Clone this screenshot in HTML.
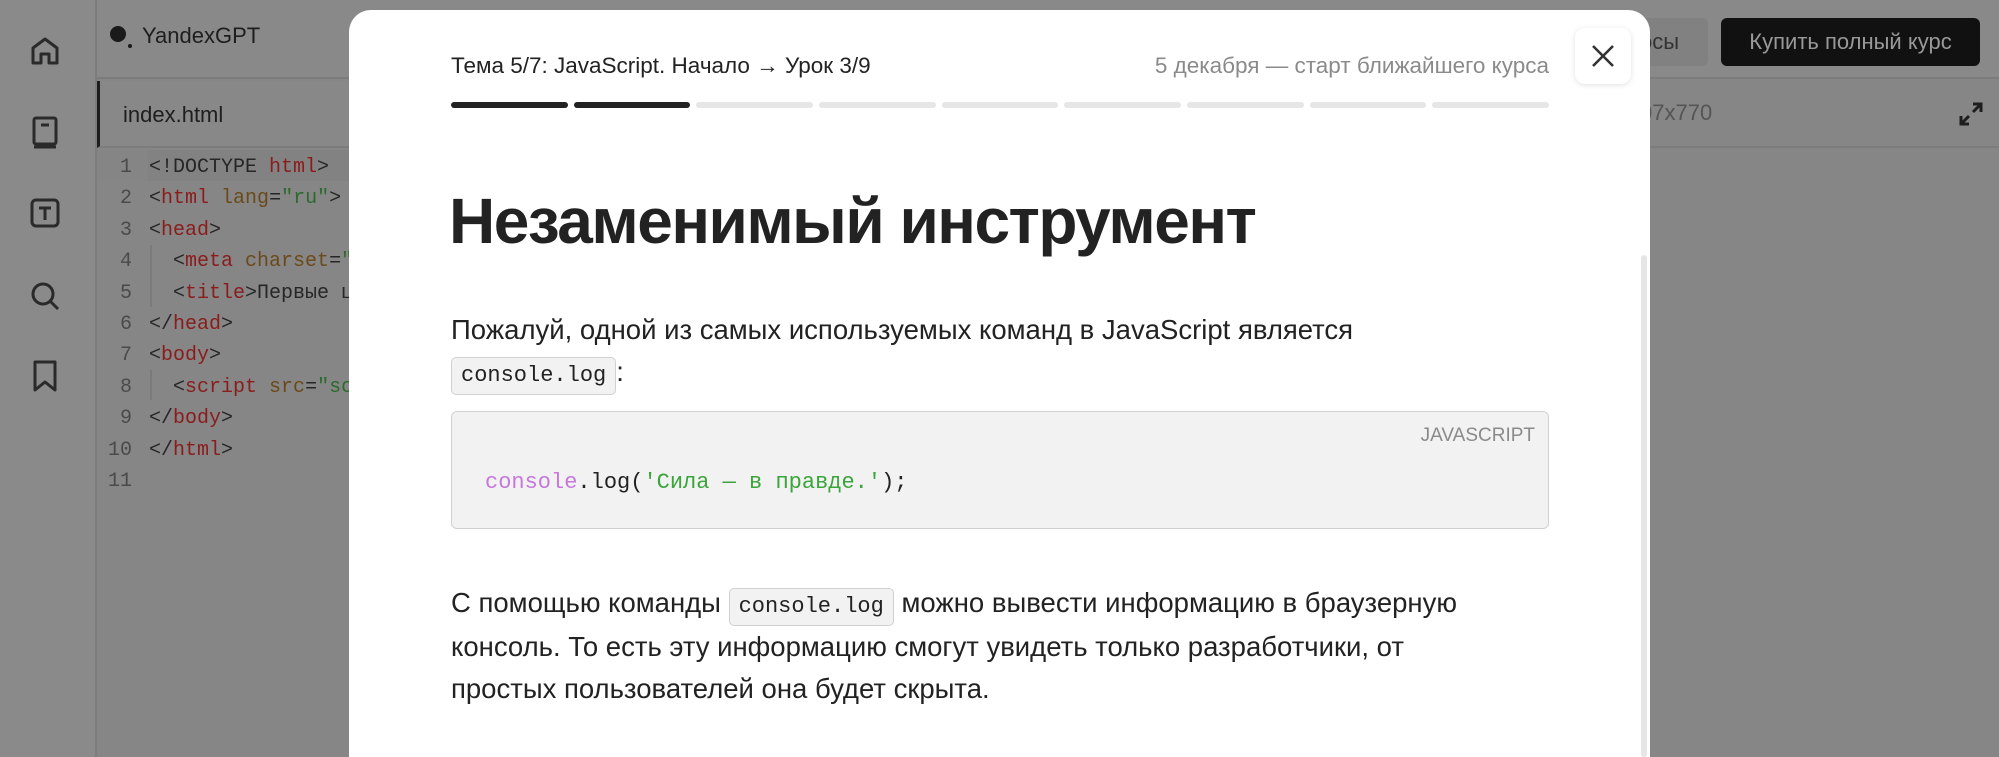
<!DOCTYPE html>
<html style="width:1999px;height:757px;overflow:hidden"><head><meta charset="utf-8">
<style>
*{margin:0;padding:0;box-sizing:border-box}
body{width:1999px;height:757px;overflow:hidden;background:#868686;font-family:"Liberation Sans","Noto Sans CJK SC",sans-serif;position:relative}
.a{position:absolute}
.side{left:0;top:0;width:97px;height:757px;background:#8a8a8a;border-right:2px solid #7c7c7c}
.top{left:97px;top:0;width:1902px;height:79px;background:#898989;border-bottom:2px solid #7c7c7c}
.code{font-family:"Liberation Mono",monospace;font-size:20px;color:#262626;white-space:pre}
.ln{color:#4a4a4a;width:36px;text-align:right;left:96px}
.r{color:#8a1c1c}.b{color:#6a4a1a}.g{color:#2d6a2d}
.modal{left:349px;top:10px;width:1301px;height:747px;background:#fff;border-radius:22px 22px 0 0}
.mc{font-family:"Liberation Mono",monospace}
.ic{background:#f2f2f2;border:1px solid #d0d0d0;border-radius:5px;font-family:"Liberation Mono",monospace;font-size:22px;color:#222;padding:0 9px}
.p{font-size:27.5px;color:#222;line-height:41.5px;white-space:nowrap}
</style></head><body>
<div class="a side"></div>
<div class="a top"></div>
<svg class="a" style="left:30px;top:36px" width="30" height="30" viewBox="0 0 30 30" fill="none" stroke="#2a2a2a" stroke-width="3" stroke-linejoin="round"><path d="M3 27V12L15 3l12 9v15h-8v-9h-8v9z"/></svg>
<svg class="a" style="left:31px;top:116px" width="28" height="34" viewBox="0 0 28 34" fill="none" stroke="#2a2a2a" stroke-width="3"><rect x="3" y="2" width="22" height="26" rx="2"/><path d="M3 31h22M10 9h8"/></svg>
<svg class="a" style="left:30px;top:198px" width="30" height="30" viewBox="0 0 30 30" fill="none" stroke="#2a2a2a" stroke-width="3"><rect x="2" y="2" width="26" height="26" rx="4"/><path d="M9 10h12M15 10v12"/></svg>
<svg class="a" style="left:30px;top:281px" width="30" height="30" viewBox="0 0 30 30" fill="none" stroke="#2a2a2a" stroke-width="3"><circle cx="13" cy="13" r="10"/><path d="M20 20l8 8"/></svg>
<svg class="a" style="left:32px;top:360px" width="26" height="32" viewBox="0 0 26 32" fill="none" stroke="#2a2a2a" stroke-width="3" stroke-linejoin="round"><path d="M3 2h20v28l-10-8-10 8z"/></svg>
<div class="a" style="left:110px;top:26px;width:16px;height:16px;border-radius:50%;background:#1a1a1a"></div>
<div class="a" style="left:128px;top:44px;width:4px;height:4px;border-radius:50%;background:#1a1a1a"></div>
<div class="a" style="left:142px;top:23px;font-size:22px;color:#1e1e1e">YandexGPT</div>
<div class="a" style="left:97px;top:81px;width:300px;height:67px;background:#888;border-left:3px solid #1e1e1e;border-bottom:2px solid #7c7c7c"></div>
<div class="a" style="left:123px;top:102px;font-size:22px;color:#1e1e1e">index.html</div>
<div class="a" style="left:97px;top:150px;width:300px;height:31px;background:#858585"></div>
<div class="a" style="left:148px;top:150px;width:210px;height:31px;background:#828282"></div>
<div class="a" style="left:150px;top:245px;width:2px;height:62px;background:#7a7a7a"></div>
<div class="a" style="left:150px;top:370px;width:2px;height:30px;background:#7a7a7a"></div>
<div class="a code ln" style="top:152px;line-height:31.4px">1
2
3
4
5
6
7
8
9
10
11</div>
<div class="a code" style="left:149px;top:152px;line-height:31.4px">&lt;!DOCTYPE <span class="r">html</span>&gt;
&lt;<span class="r">html</span> <span class="b">lang</span>=<span class="g">"ru"</span>&gt;
&lt;<span class="r">head</span>&gt;
  &lt;<span class="r">meta</span> <span class="b">charset</span>=<span class="g">"</span>
  &lt;<span class="r">title</span>&gt;Первые ц
&lt;/<span class="r">head</span>&gt;
&lt;<span class="r">body</span>&gt;
  &lt;<span class="r">script</span> <span class="b">src</span>=<span class="g">"sc</span>
&lt;/<span class="r">body</span>&gt;
&lt;/<span class="r">html</span>&gt;
</div>
<div class="a" style="left:1620px;top:18px;width:88px;height:48px;background:#818181;border-radius:6px"></div>
<div class="a" style="left:1640px;top:29px;font-size:22px;color:#333">осы</div>
<div class="a" style="left:1721px;top:18px;width:259px;height:48px;background:#111;border-radius:6px;color:#999;font-size:22px;text-align:center;line-height:48px">Купить полный курс</div>
<div class="a" style="left:1620px;top:81px;width:379px;height:67px;border-bottom:2px solid #7c7c7c"></div>
<div class="a" style="left:1640px;top:100px;font-size:22px;color:#555">07x770</div>
<svg class="a" style="left:1957px;top:100px" width="28" height="28" viewBox="0 0 28 28" fill="none" stroke="#1e1e1e" stroke-width="3"><path d="M16 4h8v8M24 4l-8 8M4 16v8h8M4 24l8-8"/></svg>
<div class="a modal"></div>
<div class="a" style="left:1575px;top:28px;width:56px;height:56px;background:#fff;border-radius:10px;box-shadow:0 1px 6px rgba(0,0,0,.12)"></div>
<svg class="a" style="left:1589px;top:42px" width="28" height="28" viewBox="0 0 28 28" stroke="#333" stroke-width="2.6"><path d="M4 4l20 20M24 4L4 24"/></svg>
<div class="a" style="left:1641px;top:255px;width:6px;height:502px;background:#e6e6e6;border-radius:3px"></div>
<div class="a" style="left:451px;top:53px;font-size:22.5px;color:#222">Тема 5/7: JavaScript. Начало → Урок 3/9</div>
<div class="a" style="right:450px;top:53px;font-size:22.5px;color:#8a8a8a">5 декабря — старт ближайшего курса</div>
<div class="a" style="left:451px;top:102px;width:1098px;height:6px;display:flex;gap:6px">
<div style="flex:1;background:#222;border-radius:3px"></div><div style="flex:1;background:#222;border-radius:3px"></div><div style="flex:1;background:#e6e6e6;border-radius:3px"></div><div style="flex:1;background:#e6e6e6;border-radius:3px"></div><div style="flex:1;background:#e6e6e6;border-radius:3px"></div><div style="flex:1;background:#e6e6e6;border-radius:3px"></div><div style="flex:1;background:#e6e6e6;border-radius:3px"></div><div style="flex:1;background:#e6e6e6;border-radius:3px"></div><div style="flex:1;background:#e6e6e6;border-radius:3px"></div></div>
<div class="a" style="left:449px;top:184px;font-size:64px;font-weight:bold;color:#222;letter-spacing:-1.5px;white-space:nowrap">Незаменимый инструмент</div>
<div class="a p" style="left:451px;top:309px">Пожалуй, одной из самых используемых команд в JavaScript является<br><span class="ic" style="display:inline-block;line-height:36px;height:38px">console.log</span>:</div>
<div class="a" style="left:451px;top:411px;width:1098px;height:118px;background:#f2f2f2;border:1.5px solid #d0d0d0;border-radius:6px"></div>
<div class="a" style="right:464px;top:425px;font-size:19px;color:#8a8a8a">JAVASCRIPT</div>
<div class="a mc" style="left:485px;top:470px;font-size:22px;color:#222;white-space:pre"><span style="color:#c678dd">console</span>.log(<span style="color:#3aa53a">'Сила — в правде.'</span>);</div>
<div class="a p" style="left:451px;top:582px">С помощью команды <span class="ic" style="display:inline-block;line-height:36px;height:38px">console.log</span> можно вывести информацию в браузерную<br>консоль. То есть эту информацию смогут увидеть только разработчики, от<br>простых пользователей она будет скрыта.</div>
</body></html>
